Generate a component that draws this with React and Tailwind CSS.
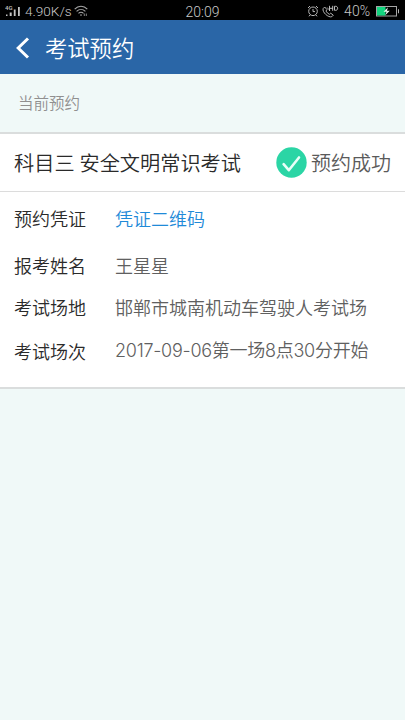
import React from "react";

const details = [
  {
    label: "预约凭证",
    value: "凭证二维码",
    row: "h-[53px] pt-0.5",
    color: "text-[#1f8ad8]",
  },
  { label: "报考姓名", value: "王星星", row: "h-[42px]", color: "text-[#606060]" },
  {
    label: "考试场地",
    value: "邯郸市城南机动车驾驶人考试场",
    row: "h-[43px]",
    color: "text-[#606060]",
  },
];

const SignalIcon = () => (
  <svg width="16" height="12" viewBox="0 0 16 12" fill="#c4c4c4">
    <text x="0" y="4.8" fontSize="6" fontFamily="Roboto" fontWeight="500">
      4G
    </text>
    <path d="M1 9.500h1.500V11H1zM4.700 7.500h2V11h-2zM8.800 4.500h1.800V11H8.800zM13 2h1.800v9H13z" />
  </svg>
);

const WifiIcon = () => (
  <svg width="14" height="12" viewBox="0 0 14 12" fill="none" stroke="#a8a8a8" strokeWidth="1.100">
    <path d="M.7 4.200C4.300.3 9.700.3 13.300 4.200M2.600 6.400c2.600-2.600 6.200-2.600 8.800 0M4.500 8.400c1.500-1.400 3.500-1.400 5 0" />
    <circle cx="7" cy="10.100" r=".8" fill="#a8a8a8" stroke="none" />
    <path d="M10.300 8.500v2.500M12.300 8.500v2.500" strokeWidth=".8" />
  </svg>
);

const AlarmIcon = () => (
  <svg width="12" height="12" viewBox="0 0 12 12" fill="none" stroke="#b5b5b5" strokeWidth="1">
    <circle cx="6" cy="6.300" r="4.300" />
    <path d="M6 4v2.600h2M1 3l2-2M11 3L9 1M3 10l-1 1.300M9 10l1 1.300" />
  </svg>
);

const CallIcon = () => (
  <svg width="17" height="13" viewBox="0 0 17 13" fill="none" stroke="#b5b5b5" strokeWidth="1">
    <path d="M1.200 3.500L2.700 2 5 4.700 3.900 6c.8 1.500 2 2.600 3.500 3.300l1.300-1.100 2.600 2-1.500 1.500C6.500 13 -.3 7 1.200 3.500z" />
    <path d="M4.800 2.800c1.600.6 2.600 1.600 3 3.200" strokeWidth=".8" />
    <path d="M7.500.8v5M10.700.8v5M7.500 3.300h3.200M12.500 1.300v4h1.200c2.600 0 2.600-4 0-4z" stroke="#cfcfcf" strokeWidth=".9" />
  </svg>
);

const BatteryIcon = () => (
  <svg width="24" height="11" viewBox="0 0 24 11">
    <rect x=".5" y=".5" width="20" height="9.500" fill="none" stroke="#a5a5a5" />
    <rect x="1" y="1" width="8.500" height="8.500" fill="#13d57f" />
    <path d="M22 3.300h1v4h-1z" fill="#b5b5b5" />
    <path d="M12 1.200L7.500 5.800h3L9.300 9.300l4.500-4.600h-2.900z" fill="#e8f5ef" />
  </svg>
);

const App = () => {
  return (
    <div className="flex min-h-screen w-full flex-col overflow-hidden bg-[#f0f9f8] font-['Roboto','Noto_Sans_CJK_SC',sans-serif] font-[350] whitespace-nowrap">
      {/* Status bar */}
      <div className="grid h-5 grid-cols-[1fr_auto_1fr] items-center bg-black text-[13.5px] leading-5 text-[#c8c8c8]">
        <div className="flex items-center pl-[5px]">
          <SignalIcon />
          <span className="ml-1 text-[13.6px]">4.90K/s</span>
          <span className="ml-0.5">
            <WifiIcon />
          </span>
        </div>
        <span className="pt-0.5 text-[14px]">20:09</span>
        <div className="flex items-center justify-end pr-[5px]">
          <AlarmIcon />
          <span className="ml-[3px]">
            <CallIcon />
          </span>
          <span className="mr-[6px] ml-[5px] text-[14px]">40%</span>
          <BatteryIcon />
        </div>
      </div>

      {/* Header */}
      <header className="flex h-[54px] items-center bg-[#2a66a7] pt-0.5 pl-4 text-white">
        <svg width="14" height="22" viewBox="0 0 14 22" fill="none" stroke="#fff" strokeWidth="3">
          <path d="M12 1.500L2.200 11 12 20.500" />
        </svg>
        <h1 className="ml-[15px] pt-0.5 text-[22.3px] leading-none font-[350]">考试预约</h1>
      </header>

      <div className="flex h-[58px] items-center pt-1 pl-[18px] text-[15.5px] text-[#909090]">
        当前预约
      </div>

      <section className="border-y-2 border-[#dadddd] bg-white">
        <div className="flex h-[58px] items-center border-b border-[#dcdcdc] pr-[14px] pl-[14px] text-[20.2px]">
          <h2 className="pt-1 font-[350] text-[#2a2a2a]">科目三 安全文明常识考试</h2>
          <div className="ml-auto flex items-center text-[#5a5a5a]">
            <svg width="31" height="31" viewBox="0 0 31 31">
              <circle cx="15.500" cy="15.500" r="15.200" fill="#2bd5a5" />
              <path
                d="M7.600 17.200l5.200 6L23 10.500"
                fill="none"
                stroke="#e8fff8"
                strokeWidth="2.600"
                strokeLinecap="round"
                strokeLinejoin="round"
              />
            </svg>
            <span className="ml-1 pt-0.5 text-[20px]">预约成功</span>
          </div>
        </div>

        <div className="h-[195px] text-[18px]">
          {details.map((item) => (
            <div key={item.label} className={`flex items-center pl-[14px] ${item.row}`}>
              <span className="w-[101px] text-[#2a2a2a]">{item.label}</span>
              <span className={item.color}>{item.value}</span>
            </div>
          ))}
          <div className="flex h-[43px] items-center pl-[14px]">
            <span className="w-[101px] pt-0.5 text-[#2a2a2a]">考试场次</span>
            <span className="pb-0.5 font-['Inter','Noto_Sans_CJK_SC',sans-serif] tracking-[-0.27px] text-[#606060]">
              2017-09-06第一场8点30分开始
            </span>
          </div>
        </div>
      </section>
    </div>
  );
};

export default App;
